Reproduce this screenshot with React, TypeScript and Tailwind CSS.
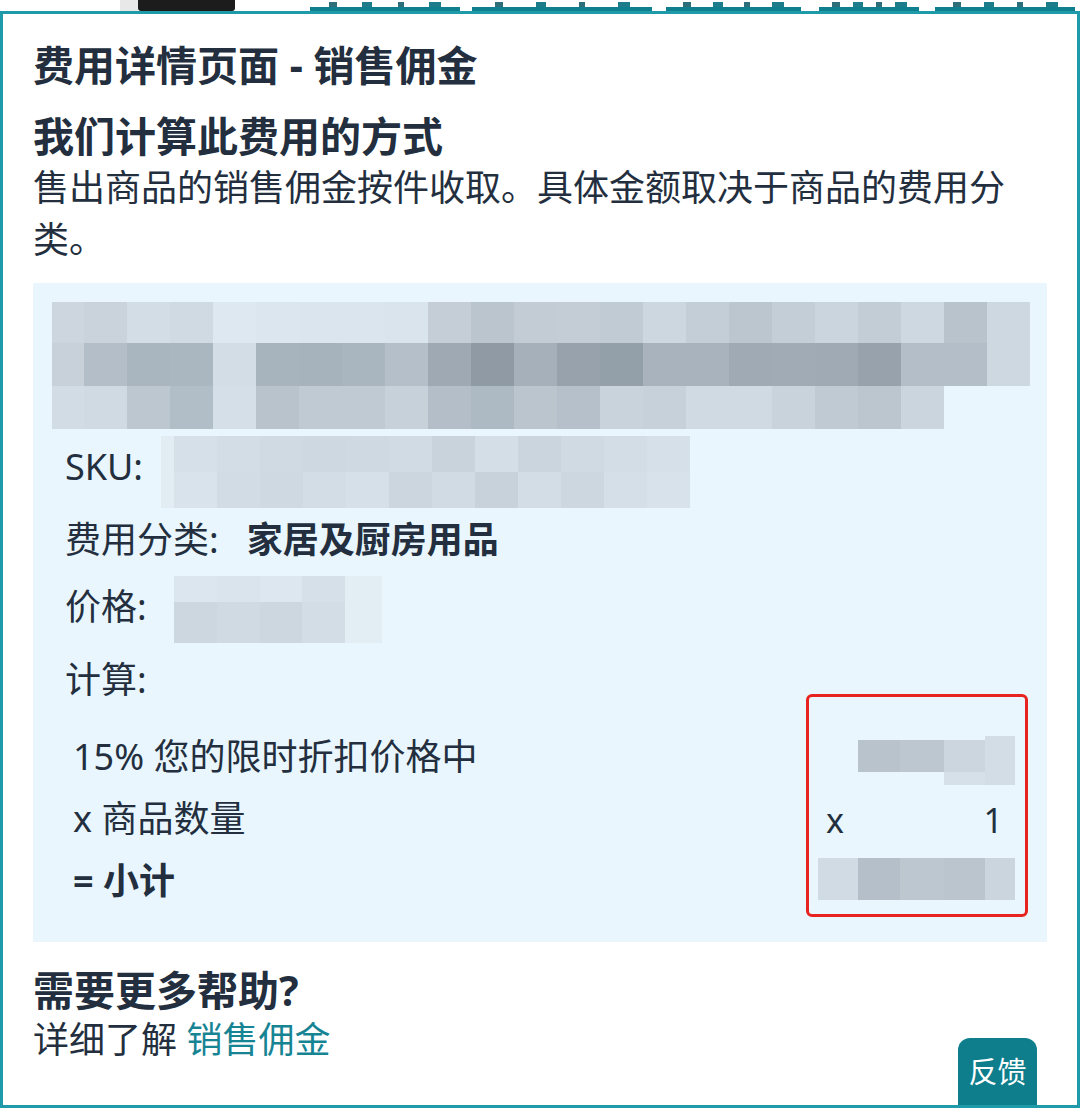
const FONT = "font-['Noto_Sans','Noto_Sans_CJK_SC',sans-serif]";

// pixelated (redacted) product title
const TITLE_ROWS = [
  {
    h: "h-[41px]",
    cells: [
      "bg-[#cdd6de]", "bg-[#cad3dc]", "bg-[#d3dde5]", "bg-[#d0dae2]", "bg-[#dde8f0]", "bg-[#dce6ee]",
      "bg-[#dbe5ed]", "bg-[#dbe5ed]", "bg-[#dae4ec]", "bg-[#c5ced6]", "bg-[#bac5ce]", "bg-[#c3ccd5]",
      "bg-[#c4cdd6]", "bg-[#c0cbd4]", "bg-[#cdd7e0]", "bg-[#c4ced7]", "bg-[#bbc6cf]", "bg-[#c4ced7]",
      "bg-[#cbd5de]", "bg-[#c3cdd6]", "bg-[#cdd8e0]", "bg-[#b9c3cc]", "bg-[#cdd8e1]",
    ],
  },
  {
    h: "h-[43px]",
    cells: [
      "bg-[#c8d1da]", "bg-[#b3bec8]", "bg-[#a9b5bf]", "bg-[#aab6c0]", "bg-[#d3dde5]", "bg-[#a7b3bd]",
      "bg-[#a6b2bc]", "bg-[#a9b5bf]", "bg-[#b4bfc9]", "bg-[#9ea9b4]", "bg-[#8f9aa5]", "bg-[#a5b0ba]",
      "bg-[#97a2ad]", "bg-[#93a0aa]", "bg-[#a9b3bd]", "bg-[#a9b3bd]", "bg-[#a0aab5]", "bg-[#a1abb6]",
      "bg-[#a0aab5]", "bg-[#98a2ad]", "bg-[#b3bec8]", "bg-[#b3bec8]", "bg-[#cdd8e1]",
    ],
  },
  {
    h: "h-[43px]",
    cells: [
      "bg-[#d2dce4]", "bg-[#d0dae2]", "bg-[#bcc7d0]", "bg-[#b1bdc7]", "bg-[#d5dfe7]", "bg-[#b8c3cc]",
      "bg-[#bfcad3]", "bg-[#bfcad3]", "bg-[#c7d1da]", "bg-[#b3bec8]", "bg-[#adb9c3]", "bg-[#bac5ce]",
      "bg-[#b5c0ca]", "bg-[#c9d3dc]", "bg-[#c7d1da]", "bg-[#cfdae2]", "bg-[#cfdae2]", "bg-[#c9d3dc]",
      "bg-[#c0cad3]", "bg-[#bcc6cf]", "bg-[#cbd5de]",
    ],
  },
];

const SKU_ROWS = [
  ["bg-[#d6e0e8]", "bg-[#d3dde5]", "bg-[#d0dae2]", "bg-[#cdd8e0]", "bg-[#cfd9e1]", "bg-[#d1dbe3]",
   "bg-[#c9d3dc]", "bg-[#d4dee6]", "bg-[#cbd5de]", "bg-[#d0dae2]", "bg-[#d3dde5]", "bg-[#d6e0e8]"],
  ["bg-[#d9e3eb]", "bg-[#d2dce4]", "bg-[#cfd9e1]", "bg-[#d3dde5]", "bg-[#d6e0e8]", "bg-[#ccd6df]",
   "bg-[#d1dbe3]", "bg-[#c8d2db]", "bg-[#d3dde5]", "bg-[#cdd7e0]", "bg-[#d5dfe7]", "bg-[#d8e2ea]"],
];

// bottoms of the link row above the panel, cut off by the screenshot
const STRIP_LINKS = [
  { w: "w-[150px]", ml: "ml-[75px]" },
  { w: "w-[180px]", ml: "ml-[12px]" },
  { w: "w-[135px]", ml: "ml-[14px]" },
  { w: "w-[100px]", ml: "ml-[18px]" },
  { w: "w-[140px]", ml: "ml-[16px]" },
];

function Mosaic() {
  return (
    <div className="flex flex-col">
      {TITLE_ROWS.map((row, i) => (
        <div key={i} className={`flex ${row.h}`}>
          {row.cells.map((c, j) => (
            <div key={j} className={`shrink-0 ${c} ${j === 0 ? "w-[32px]" : "w-[43px]"}`} />
          ))}
        </div>
      ))}
    </div>
  );
}

function SkuBlur() {
  return (
    <div className="ml-[18px] mt-[10px] flex">
      <div className="w-[13px] bg-[#e2ecf3]" />
      <div className="flex flex-col">
        {SKU_ROWS.map((row, i) => (
          <div key={i} className="flex h-[36px]">
            {row.map((c, j) => (
              <div key={j} className={`w-[43px] ${c}`} />
            ))}
          </div>
        ))}
      </div>
    </div>
  );
}

function PriceBlur() {
  return (
    <div className="ml-[27px] flex h-[67px]">
      <div className="flex flex-col">
        <div className="flex h-[26px]">
          <div className="w-[43px] bg-[#dce6ee]" />
          <div className="w-[43px] bg-[#dae4ec]" />
          <div className="w-[42px] bg-[#dde7ef]" />
          <div className="w-[43px] bg-[#d6e0e8]" />
        </div>
        <div className="flex h-[41px]">
          <div className="w-[43px] bg-[#cdd7e0]" />
          <div className="w-[43px] bg-[#d0dae2]" />
          <div className="w-[42px] bg-[#cdd7e0]" />
          <div className="w-[43px] bg-[#d3dde5]" />
        </div>
      </div>
      <div className="w-[37px] bg-[#e3edf4]" />
    </div>
  );
}

function TopStrip() {
  return (
    <div className="flex h-[11px] overflow-hidden">
      <div className="w-[120px] shrink-0 bg-white" />
      <div className="w-[18px] shrink-0 bg-[#e8e8e8]" />
      <div className="w-[97px] shrink-0 rounded-b-[3px] bg-[#1c1c1c]" />
      {STRIP_LINKS.map((l, i) => (
        <div key={i} className={`${l.w} ${l.ml} flex shrink-0 flex-col justify-end`}>
          <div className="flex h-[5px] justify-around px-[6px]">
            <div className="w-[8px] bg-[#2c6f7a]" />
            <div className="w-[10px] bg-[#1d7d8b]" />
            <div className="w-[6px] bg-[#2c6f7a]" />
            <div className="w-[12px] bg-[#1d7d8b]" />
          </div>
          <div className="h-[4px] bg-[#0f7f8f]" />
        </div>
      ))}
    </div>
  );
}

export default function App() {
  return (
    <div className={`h-[1108px] w-[1080px] overflow-hidden bg-white ${FONT} text-[#232f3e]`}>
      <TopStrip />
      <div className="relative h-[1097px] border-[3px] border-[#1f9aa8] bg-white px-[30px] pt-[25px]">
        <h1 className="text-[41px] font-bold leading-[52px]">费用详情页面 - 销售佣金</h1>
        <h2 className="mt-[19px] text-[41px] font-bold leading-[52px]">我们计算此费用的方式</h2>
        <p className="text-[36px] leading-[52px]">
          售出商品的销售佣金按件收取。具体金额取决于商品的费用分类。
        </p>

        <div className="mt-[17px] bg-[#e9f6fd] pb-[25px] pl-[32px] pr-[19px] pt-[19px]">
          <div className="-ml-[13px]">
            <Mosaic />
          </div>

          <div className="mt-[2px] flex h-[72px] items-center">
            <span className="text-[36px] leading-[72px]">SKU:</span>
            <SkuBlur />
          </div>
          <div className="flex h-[73px] items-center">
            <span className="text-[36px] leading-[73px]">费用分类:</span>
            <span className="ml-[28px] text-[36px] font-bold leading-[73px]">家居及厨房用品</span>
          </div>
          <div className="flex h-[67px] items-center">
            <span className="-mt-[5px] text-[36px] leading-[62px]">价格:</span>
            <PriceBlur />
          </div>

          <div className="flex justify-between">
            <div className="flex flex-col">
              <span className="text-[36px] leading-[74px]">计算:</span>
              <div className="mt-[9px] flex flex-col pl-[8px] text-[36px] leading-[62px]">
                <span>15% 您的限时折扣价格中</span>
                <span>x 商品数量</span>
                <span className="font-bold">= 小计</span>
              </div>
            </div>

            <div className="mt-[51px] flex h-[223px] w-[222px] flex-col rounded-[6px] border-[3px] border-[#e8231f] pb-[14px] pt-[43px]">
              <div className="flex h-[45px] items-start justify-end pr-[10px]">
                <div className="h-[32px] w-[42px] bg-[#b9c3cc]" />
                <div className="h-[32px] w-[44px] bg-[#bdc7d0]" />
                <div className="flex h-[45px] w-[41px] flex-col">
                  <div className="h-[32px] bg-[#ccd6df]" />
                  <div className="h-[13px] bg-[#d6e0e8]" />
                </div>
                <div className="-mt-[4px] h-[49px] w-[30px] bg-[#d3dde5]" />
              </div>
              <div className="mt-[15px] flex justify-between pl-[17px] pr-[22px] text-[34px] leading-[40px]">
                <span>x</span>
                <span>1</span>
              </div>
              <div className="mt-[18px] flex h-[42px] pl-[9px] pr-[10px]">
                <div className="w-[40px] bg-[#d1dbe3]" />
                <div className="w-[42px] bg-[#b5bfc9]" />
                <div className="w-[44px] bg-[#bdc7d0]" />
                <div className="w-[41px] bg-[#bbc5ce]" />
                <div className="w-[30px] bg-[#cbd5de]" />
              </div>
            </div>
          </div>
        </div>

        <h3 className="mt-[23px] text-[41px] font-bold leading-[50px]">需要更多帮助?</h3>
        <p className="text-[36px] leading-[50px]">
          详细了解 <a className="text-[#178494]">销售佣金</a>
        </p>

        <button className="absolute bottom-0 right-[40px] flex h-[67px] w-[79px] items-center justify-center rounded-t-[12px] bg-[#0e7e8c] text-[29px] leading-none text-white">
          反馈
        </button>
      </div>
    </div>
  );
}
